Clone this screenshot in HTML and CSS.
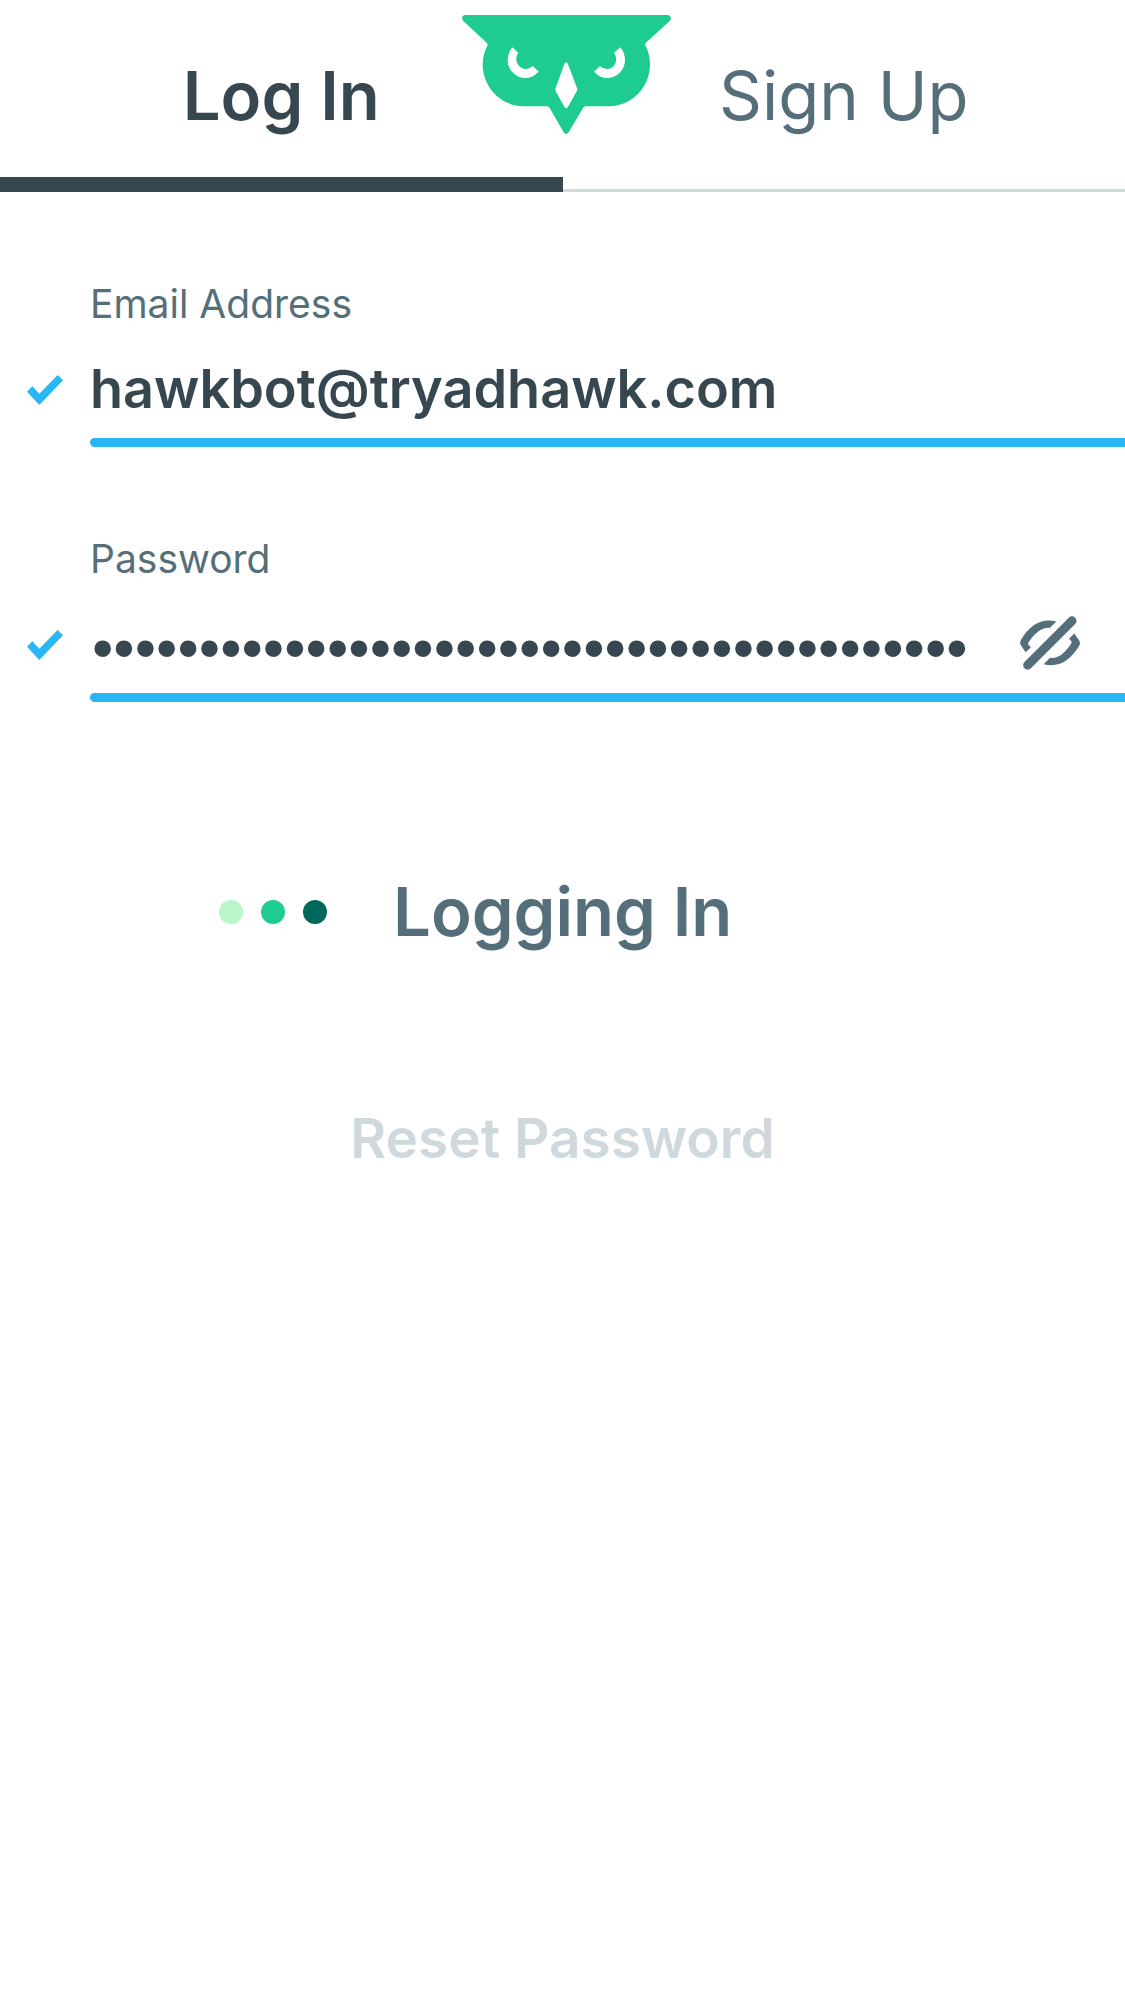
FILE: index.html
```html
<!DOCTYPE html>
<html lang="en">
<head>
<meta charset="utf-8">
<meta name="viewport" content="width=device-width, initial-scale=1">
<title>Log In</title>
<link rel="stylesheet" href="styles.css">
</head>
<body>
<header class="header">
  <nav class="tabs">
    <a class="tab tab-active" href="#login" aria-current="page">Log In</a>
    <a class="tab" href="#signup">Sign Up</a>
  </nav>
  <svg class="logo" viewBox="36 44 627 357" role="img" aria-label="Hawk">
    <path fill="#1fcc8f" d="M46 44H652C662 44 666 55 659 62L587 128Q584 131 586 135C595 152 600 170 600 192C600 262 545 318 476 318H407Q402 318 399 323L357 394Q348 407 340 394L299 323Q296 318 291 318H222C154 318 98 262 98 192C98 170 104 152 112 136Q114 132 111 128L40 62C33 55 36 44 46 44Z"/>
    <path fill="#fff" d="M187 141L205 157C190 179 205 206 228 206Q240 206 248 197L266 214C251 228 240 233 227 233C197 233 173 209 173 179Q173 158 187 141ZM511 141L492 157C507 179 494 206 471 206Q459 206 450 197L432 214C446 228 458 233 471 233C501 233 525 209 525 179Q525 158 511 141ZM344 189Q348 182 353 189L381 263Q383 268 380 273L353 321Q348 327 344 321L317 273Q315 268 317 263Z"/>
  </svg>
</header>
<main>
  <form class="form">
    <div class="field">
      <label class="label" for="email">Email Address</label>
      <svg class="check" viewBox="81 315 108 90" aria-hidden="true"><path fill="#29b6f6" d="M81 365L97 349L118 371L173 315L189 331L118 405Z"/></svg>
      <div class="control">
        <input class="input" id="email" type="email" value="hawkbot@tryadhawk.com">
      </div>
    </div>
    <div class="field">
      <label class="label" for="password">Password</label>
      <svg class="check" viewBox="81 315 108 90" aria-hidden="true"><path fill="#29b6f6" d="M81 365L97 349L118 371L173 315L189 331L118 405Z"/></svg>
      <div class="control">
        <input class="input input-password" id="password" type="password" value="hawkbothawkbothawkbothawkbothawkbothawkbo">
        <button class="reveal" type="button" aria-label="Show password">
          <svg class="eye" viewBox="360 80 180 161" aria-hidden="true">
            <path fill="none" stroke="#546e7a" stroke-width="27" stroke-linecap="round" d="M383 227L516 94"/>
            <path fill="#546e7a" d="M469 96L450 115C422 113 402 134 385 160Q383 164 386 167L393 173L377 188L363 168Q358 160 363 151C392 103 427 85 469 96ZM431 224L450 205C478 208 498 186 514 161Q516 157 513 154L507 148L523 132L537 152Q542 160 538 168C510 216 473 235 431 224Z"/>
          </svg>
        </button>
      </div>
    </div>
    <button class="submit" type="submit">
      <span class="dots" aria-hidden="true"><span class="dot dot-light"></span><span class="dot dot-mid"></span><span class="dot dot-dark"></span></span>
      <span>Logging In</span>
    </button>
    <a class="reset" href="#reset">Reset Password</a>
  </form>
</main>
</body>
</html>
```
FILE: styles.css
```css
* {
  box-sizing: border-box;
}

body {
  margin: 0;
  background: #fff;
  color: #37474f;
  font-family: Inter, "Liberation Sans", sans-serif;
}

.header {
  position: relative;
}

.tabs {
  display: flex;
}

.tab {
  flex: 1;
  padding: 15px 0 12px;
  border-bottom: 3px solid #cfd8dc;
  color: #546e7a;
  font-size: 67px;
  line-height: 162px;
  text-align: center;
  text-decoration: none;
}

.tab-active {
  padding-bottom: 0;
  border-bottom: 15px solid #37474f;
  color: #37474f;
  font-weight: 600;
}

/* The logo sits over the seam between the two tabs. */
.logo {
  position: absolute;
  top: 15px;
  left: 50%;
  width: 209px;
  height: 119px;
  margin-left: -101px;
}

.form {
  display: flex;
  flex-direction: column;
  padding-top: 80px;
}

.field {
  display: grid;
  grid-template-columns: 90px 1fr;
  align-items: center;
  margin-bottom: 80px;
}

.label {
  grid-column: 2;
  padding-top: 2px;
  color: #546e7a;
  font-size: 39px;
  line-height: 60px;
}

.check {
  width: 36px;
  height: 30px;
  margin: 0 0 2px 27px;
}

.control {
  display: flex;
  align-items: center;
  position: relative;
  padding-bottom: 9px;
}

.control::after {
  content: "";
  position: absolute;
  right: 0;
  bottom: 0;
  left: 0;
  height: 9px;
  border-radius: 5px 0 0 5px;
  background: #29b6f6;
}

.input {
  flex: 1;
  min-width: 0;
  height: 104px;
  padding: 4px 0 0;
  border: 0;
  outline: 0;
  background: none;
  color: #37474f;
  font: 600 54px Inter, "Liberation Sans", sans-serif;
}

.input-password {
  padding: 14px 0 0 2px;
  font: 61px "Liberation Sans", Arial, sans-serif;
}

.reveal {
  display: flex;
  padding: 0;
  margin: 4px 45px 0;
  border: 0;
  background: none;
}

.eye {
  width: 60px;
  height: 54px;
}

.submit {
  display: flex;
  align-items: center;
  gap: 66px;
  margin-top: 90px;
  padding: 0 0 0 219px;
  border: 0;
  background: none;
  color: #546e7a;
  font: 600 67px/80px Inter, "Liberation Sans", sans-serif;
}

.dots {
  display: flex;
  gap: 18px;
}

.dot {
  width: 24px;
  height: 24px;
  border-radius: 50%;
}

.dot-light {
  background: #b9f6ca;
}

.dot-mid {
  background: #1fcc8f;
}

.dot-dark {
  background: #00695c;
}

.reset {
  align-self: center;
  margin-top: 150px;
  color: #cfd8dc;
  font-size: 55px;
  font-weight: 600;
  line-height: 72px;
  text-decoration: none;
}
```
